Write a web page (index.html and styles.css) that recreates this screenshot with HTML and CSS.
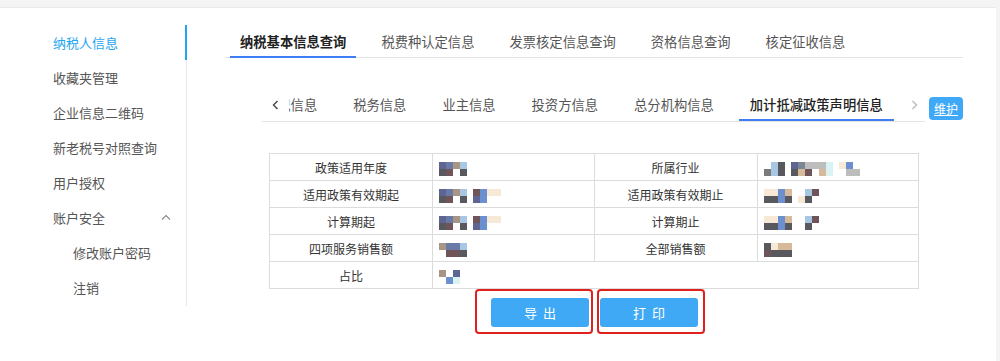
FILE: index.html
```html
<!DOCTYPE html>
<html>
<head>
	<title>纳税人信息</title>
	<meta charset="UTF-8">
	<link rel="stylesheet" href="styles.css">
</head>
<body>
	<div class="page">
		<ul class="sidebar">
			<li class="side-item active">纳税人信息</li>
			<li class="side-item">收藏夹管理</li>
			<li class="side-item">企业信息二维码</li>
			<li class="side-item">新老税号对照查询</li>
			<li class="side-item">用户授权</li>
			<li class="side-item group">账户安全
				<svg class="chev" width="10" height="6" viewBox="0 0 10 6"><path d="M1 5.5 L5 1.5 L9 5.5" fill="none" stroke="#8a8a8a" stroke-width="1.1"/></svg>
			</li>
			<li class="side-item sub">修改账户密码</li>
			<li class="side-item sub">注销</li>
		</ul>

		<div class="main">
			<ul class="tabs">
				<li class="tab active">纳税基本信息查询</li>
				<li class="tab">税费种认定信息</li>
				<li class="tab">发票核定信息查询</li>
				<li class="tab">资格信息查询</li>
				<li class="tab">核定征收信息</li>
			</ul>

			<div class="sub-row">
				<div class="subtabs">
					<span class="arrow prev"><svg width="7" height="10" viewBox="0 0 7 10"><path d="M5.5 1 L1.5 5 L5.5 9" fill="none" stroke="#444" stroke-width="1.4"/></svg></span>
					<div class="viewport">
						<ul class="sub-list">
							<li>登记信息</li>
							<li>税务信息</li>
							<li>业主信息</li>
							<li>投资方信息</li>
							<li>总分机构信息</li>
							<li class="active">加计抵减政策声明信息</li>
						</ul>
					</div>
					<span class="arrow next"><svg width="7" height="10" viewBox="0 0 7 10"><path d="M1.5 1 L5.5 5 L1.5 9" fill="none" stroke="#bbb" stroke-width="1.4"/></svg></span>
				</div>
				<span class="btn-edit">维护</span>
			</div>

			<table class="info">
				<tr>
					<td class="label">政策适用年度</td>
					<td class="value">
						<span class="mosaic"><i class="s"></i><i class="k"></i><i class="v"></i><i class="b"></i><i class="t"></i><i></i><i class="l"></i><i class="k"></i></span>
					</td>
					<td class="label">所属行业</td>
					<td class="value">
						<span class="mosaic"><i></i><i class="g2"></i><i class="l"></i><i class="l"></i><i class="k"></i><i class="k"></i></span><span class="mosaic"><i class="s"></i><i class="k"></i><i class="h"></i><i class="p"></i><i class="g"></i><i class="b"></i><i class="g"></i><i></i><i class="g"></i><i class="p"></i><i class="y"></i><i class="y"></i></span><span class="mosaic"><i class="c"></i><i></i><i class="m"></i><i class="g"></i><i></i><i class="g"></i></span>
					</td>
				</tr>
				<tr>
					<td class="label">适用政策有效期起</td>
					<td class="value">
						<span class="mosaic"><i class="s"></i><i class="k"></i><i class="v"></i><i class="b"></i><i class="t"></i><i></i><i class="l"></i><i class="k"></i></span><span class="mosaic"><i class="b"></i><i class="s"></i><i class="m"></i><i class="m"></i><i class="c"></i><i></i><i class="c"></i><i></i></span>
					</td>
					<td class="label">适用政策有效期止</td>
					<td class="value">
						<span class="mosaic"><i class="c"></i><i class="k"></i><i class="c"></i><i class="k"></i><i class="m"></i><i class="m"></i><i class="p"></i><i class="k"></i></span><span class="mosaic one"><i></i><i class="c"></i></span><span class="mosaic"><i class="l"></i><i class="k"></i><i class="b"></i><i></i></span>
					</td>
				</tr>
				<tr>
					<td class="label">计算期起</td>
					<td class="value">
						<span class="mosaic"><i class="s"></i><i class="k"></i><i class="v"></i><i class="b"></i><i class="t"></i><i></i><i class="l"></i><i class="k"></i></span><span class="mosaic"><i class="b"></i><i class="s"></i><i class="m"></i><i class="m"></i><i class="c"></i><i></i><i class="c"></i><i></i></span>
					</td>
					<td class="label">计算期止</td>
					<td class="value">
						<span class="mosaic"><i class="c"></i><i class="k"></i><i class="c"></i><i class="k"></i><i class="m"></i><i class="m"></i><i class="p"></i><i class="k"></i></span><span class="mosaic one"><i></i><i></i></span><span class="mosaic"><i class="l"></i><i class="k"></i><i class="b"></i><i></i></span>
					</td>
				</tr>
				<tr>
					<td class="label">四项服务销售额</td>
					<td class="value">
						<span class="mosaic"><i class="t"></i><i></i><i class="v"></i><i class="b"></i><i class="v"></i><i class="b"></i><i class="l"></i><i class="k"></i></span>
					</td>
					<td class="label">全部销售额</td>
					<td class="value">
						<span class="mosaic"><i class="k"></i><i class="b"></i><i class="c"></i><i class="k"></i><i class="p"></i><i class="k"></i><i class="p"></i><i class="k"></i></span>
					</td>
				</tr>
				<tr>
					<td class="label">占比</td>
					<td class="value" colspan="3">
						<span class="mosaic"><i class="t"></i><i></i><i></i><i class="m"></i><i class="s"></i><i class="y"></i></span>
					</td>
				</tr>
			</table>

			<div class="actions">
				<div class="mark first"><span class="btn">导出</span></div>
				<div class="mark second"><span class="btn">打印</span></div>
			</div>
		</div>
	</div>
</body>
</html>
```

FILE: styles.css
```css
*{
	margin: 0;
	padding: 0;
}
ul{
	list-style: none;
}
body{
	background: #f4f4f4;
	font-family: "Noto Sans CJK SC", "Liberation Sans", sans-serif;
	font-size: 13px;
	color: #555;
}
.page{
	display: flex;
	background: #fff;
	margin: 7px 4px 0 0;
	height: 354px;
	border-top: 1px solid #e9e9e9;
}

/* left menu */
.sidebar{
	width: 186px;
	height: 281px;
	margin-top: 17px;
	border-right: 1px solid #e8e8e8;
}
.side-item{
	height: 35px;
	line-height: 35px;
	padding-left: 53px;
	padding-right: 15px;
	display: flex;
	justify-content: space-between;
	align-items: center;
}
.side-item.active{
	color: #1ea6f2;
	margin-right: -1px;
	border-right: 2px solid #1ea6f2;
}
.side-item.sub{
	padding-left: 73px;
}
.chev{
	margin-top: -2px;
}

/* right content */
.main{
	flex: 1;
	padding: 19px 33px 0 38px;
}
.tabs{
	display: flex;
	height: 30px;
	border-bottom: 1px solid #e4e4e4;
	padding-left: 5px;
}
.tab{
	padding: 0 10px;
	margin-right: 15px;
	line-height: 29px;
	font-size: 13.3px;
	color: #555;
}
.tab.active{
	color: #222;
	font-weight: bold;
	border-bottom: 2px solid #3d7ef5;
	height: 29px;
}

.sub-row{
	display: flex;
	align-items: flex-end;
	margin-top: 33px;
	padding-left: 37px;
}
.subtabs{
	flex: 1;
	display: flex;
	height: 30px;
	border-bottom: 1px solid #e4e4e4;
}
.arrow{
	display: flex;
	align-items: center;
	justify-content: center;
	height: 28px;
}
.arrow.prev{
	width: 27px;
}
.arrow.next{
	width: 22px;
}
.viewport{
	flex: 1;
	overflow: hidden;
}
.sub-list{
	display: flex;
	gap: 14px;
	margin-left: -36px;
	white-space: nowrap;
}
.sub-list li{
	padding: 0 11px;
	line-height: 28px;
	font-size: 13.3px;
	color: #555;
}
.sub-list .active{
	color: #222;
	font-weight: 500;
	border-bottom: 2px solid #3d7ef5;
	height: 28px;
}
.btn-edit{
	width: 34px;
	height: 23px;
	line-height: 23px;
	margin: 0 0 2px 4px;
	background: #3fa9f8;
	border-radius: 4px;
	color: #fff;
	font-size: 12px;
	text-align: center;
	text-decoration: underline;
}

/* info table */
.info{
	border-collapse: collapse;
	margin: 31px 0 0 44px;
	width: 650px;
	table-layout: fixed;
}
.info td{
	border: 1px solid #dcdcdc;
	height: 26px;
	font-size: 12px;
}
.info .label{
	width: 162px;
	text-align: center;
	color: #333;
}
.info .value{
	padding-left: 6px;
}
.mosaic{
	display: inline-grid;
	grid-auto-flow: column;
	grid-template-rows: 7px 7px;
	grid-auto-columns: 7px;
	vertical-align: middle;
	margin-right: 6px;
}
.mosaic.one{
	margin-right: 0;
}
.mosaic i{ display: block; }
.mosaic .k{ background: #58595f; }
.mosaic .s{ background: #5e6592; }
.mosaic .v{ background: #6a7aa6; }
.mosaic .b{ background: #6f5459; }
.mosaic .t{ background: #a99585; }
.mosaic .l{ background: #a7c7e2; }
.mosaic .m{ background: #6b8fcf; }
.mosaic .c{ background: #f7e9d5; }
.mosaic .g{ background: #bdbdbd; }
.mosaic .g2{ background: #7a7a7a; }
.mosaic .h{ background: #7a8590; }
.mosaic .p{ background: #d6ba9a; }
.mosaic .y{ background: #d9f2f4; }

/* buttons */
.actions{
	display: flex;
	gap: 4px;
	padding-left: 250px;
}
.mark{
	border: 2px solid #e0201c;
	border-radius: 4px;
	padding: 7px 2px 5px 14px;
}
.mark.second{
	padding: 7px 5px 5px 1px;
}
.btn{
	display: block;
	width: 98px;
	height: 29px;
	line-height: 29px;
	background: #3fa9f5;
	border-radius: 3px;
	color: #fff;
	text-align: center;
	font-size: 13px;
	letter-spacing: 6px;
	text-indent: 6px;
}
```
